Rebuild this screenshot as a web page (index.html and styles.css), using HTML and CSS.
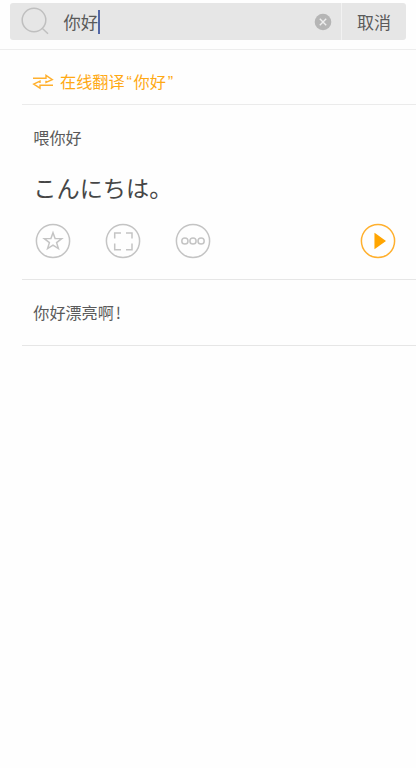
FILE: index.html
```html
<!DOCTYPE html>
<html lang="zh-CN">
<head>
<meta charset="utf-8">
<title>翻译</title>
<link rel="stylesheet" href="styles.css">
</head>
<body>
<header class="header">
  <div class="search">
    <svg class="search-icon" width="30" height="30" viewBox="0 0 30 30"><circle cx="13" cy="13" r="11.8"/><path d="M21.2 21.2l5.8 5.6"/></svg>
    <span class="query">你好</span><span class="caret"></span>
    <svg class="clear" width="18" height="18" viewBox="0 0 18 18"><circle cx="9" cy="9" r="8.3"/><path d="M5.8 5.8l6.4 6.4M12.2 5.8l-6.4 6.4"/></svg>
    <div class="cancel">取消</div>
  </div>
</header>
<main class="results">
  <section class="online">
    <svg class="swap" width="22" height="16" viewBox="0 0 22 16"><path d="M1 4.3h13V1.4L20.3 5.6 14 8.4V6.7M21 11.3H8v2.9L1.7 10 8 7.2v1.7"/></svg>
    <span class="online-text">在线翻译<span class="quote">“</span>你好<span class="quote">”</span></span>
  </section>
  <section class="entry">
    <p class="source">喂你好</p>
    <p class="target" lang="ja">こんにちは。</p>
    <div class="actions">
      <svg class="action" width="36" height="36" viewBox="0 0 36 36"><circle cx="18" cy="18" r="16.6"/><path d="M18 9.7l2.1 5.8 6.6.1-5.1 4 1.8 6-5.4-3.5-5.4 3.5 1.8-6-5.1-4 6.6-.1z"/></svg>
      <svg class="action" width="36" height="36" viewBox="0 0 36 36"><circle cx="18" cy="18" r="16.6"/><path d="M9.7 15.5V10H16M21 10h6v5.5M27 20.5v6.2h-6M16 26.7H9.7v-6.2"/></svg>
      <svg class="action" width="36" height="36" viewBox="0 0 36 36"><circle cx="18" cy="18" r="16.6"/><circle cx="9.9" cy="18" r="3.1"/><circle cx="18" cy="18" r="3.1"/><circle cx="26.1" cy="18" r="3.1"/></svg>
      <svg class="action play" width="36" height="36" viewBox="0 0 36 36"><circle cx="18" cy="18" r="16.6"/><path d="M15.2 11.2l9.5 6.8-9.5 6.8z"/></svg>
    </div>
  </section>
  <section class="related"><p class="source">你好漂亮啊<span class="bang">!</span></p></section>
</main>
</body>
</html>
```
FILE: styles.css
```css
* {
  box-sizing: border-box;
}

body {
  margin: 0;
  min-height: 768px;
  background: #fefefe;
  color: #5a5a5a;
  font-family: "Noto Sans CJK SC", sans-serif;
}

p {
  margin: 0;
}

svg {
  flex: none;
  fill: none;
}

.header {
  height: 50px;
  padding: 3px 10px 0 9.5px;
  border-bottom: 1px solid #ededed;
}

.search {
  display: flex;
  align-items: center;
  height: 37px;
  padding-left: 11.5px;
  background: #e6e6e6;
  border-radius: 3px;
}

.search-icon {
  stroke: #bfbfbf;
  stroke-width: 1.5;
}

.query {
  margin-left: 12.5px;
  font-size: 17.3px;
  line-height: 37px;
}

.caret {
  width: 2px;
  height: 24px;
  background: #5266a5;
}

.clear {
  margin-left: auto;
  margin-right: 9px;
  stroke: #eee;
  stroke-width: 1.4;
}

.clear circle {
  fill: #b5b5b5;
  stroke: none;
}

.cancel {
  width: 65px;
  height: 37px;
  border-left: 1px solid #f2f2f2;
  font-size: 17px;
  line-height: 37px;
  text-align: center;
}

.results {
  margin-left: 22px;
}

.online {
  display: flex;
  align-items: center;
  height: 55px;
  padding: 9px 0 0 10px;
  border-bottom: 1px solid #ebebeb;
  color: #ffa914;
}

.swap {
  stroke: #ffb02e;
  stroke-width: 1.4;
}

.online-text {
  margin-left: 6px;
  font-size: 16.2px;
  line-height: 24px;
  white-space: nowrap;
}

.quote {
  display: inline-block;
  width: 8.8px;
  font-family: "Liberation Sans", sans-serif;
  text-align: center;
}

.entry {
  height: 175px;
  padding: 20px 21px 0 11.3px;
  border-bottom: 1px solid #e6e6e6;
}

.source {
  font-size: 16.1px;
  line-height: 24px;
}

.target {
  margin-top: 21px;
  color: #464646;
  font-family: "Noto Sans CJK JP", sans-serif;
  font-size: 23.2px;
  line-height: 34px;
}

.actions {
  display: flex;
  gap: 34px;
  margin: 18.5px 0 0 2px;
}

.action {
  stroke: #c4c4c4;
  stroke-width: 1.5;
}

.play {
  margin-left: auto;
  margin-right: -.7px;
  stroke: #ffb02e;
}

.play path {
  fill: #ffa500;
  stroke: #ffa500;
}

.related {
  height: 66px;
  padding: 20px 0 0 11.3px;
  border-bottom: 1px solid #e6e6e6;
}

.bang {
  margin-left: 2px;
}
```
